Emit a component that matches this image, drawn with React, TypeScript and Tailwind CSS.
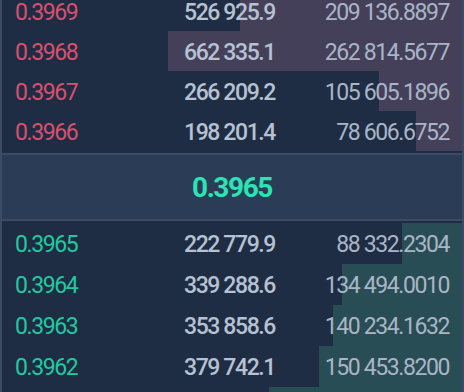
import React from "react";

type Level = { price: string; amount: string; total: string; depth: number };

const ASKS: Level[] = [
  { price: "0.3969", amount: "526 925.9", total: "209 136.8897", depth: 222 },
  { price: "0.3968", amount: "662 335.1", total: "262 814.5677", depth: 294 },
  { price: "0.3967", amount: "266 209.2", total: "105 605.1896", depth: 83 },
  { price: "0.3966", amount: "198 201.4", total: "78 606.6752", depth: 46 },
];

const BIDS: Level[] = [
  { price: "0.3965", amount: "222 779.9", total: "88 332.2304", depth: 60 },
  { price: "0.3964", amount: "339 288.6", total: "134 494.0010", depth: 120 },
  { price: "0.3963", amount: "353 858.6", total: "140 234.1632", depth: 129 },
  { price: "0.3962", amount: "379 742.1", total: "150 453.8200", depth: 143 },
  { price: "0.3961", amount: "402 118.3", total: "159 279.0848", depth: 193 },
];

function Row({ level, side }: { level: Level; side: "ask" | "bid" }) {
  const ask = side === "ask";
  return (
    <div className={`relative flex items-center px-[13px] pt-[2px] ${ask ? "h-10" : "h-[41px]"}`}>
      {/* depth bar */}
      <div
        className={`absolute right-0 top-0 bottom-0 ${ask ? "bg-[#45405a]" : "bg-[#294d54]"}`}
        style={{ width: level.depth }}
      />
      <span
        className={`relative w-[130px] ${ask ? "text-[#d9506e]" : "text-[#22c9a0]"}`}
      >
        {level.price}
      </span>
      <span className="relative w-[130px] text-right font-medium text-[#b6c1d1]">
        {level.amount}
      </span>
      <span className="relative flex-1 text-right text-[#a9b5c6]">{level.total}</span>
    </div>
  );
}

export default function App() {
  return (
    <div
      className="h-[392px] w-[464px] overflow-hidden bg-[#1f2d44] border-x-2 border-[#3b4c64] text-[23px] tracking-[-1.4px] leading-none"
      style={{ fontFamily: "Roboto, 'Liberation Sans', sans-serif" }}
    >
      {/* asks */}
      <div className="-mt-[9px] pb-[2px]">
        {ASKS.map((l) => (
          <Row key={l.price} level={l} side="ask" />
        ))}
      </div>

      {/* last price */}
      <div className="flex h-[68px] items-center justify-center border-y-2 border-[#3b4c64] bg-[#2a3c56] pt-[2px]">
        <span className="text-[28px] font-bold text-[#2be3b3]">0.3965</span>
      </div>

      {/* bids */}
      <div className="pt-[2px]">
        {BIDS.map((l) => (
          <Row key={l.price} level={l} side="bid" />
        ))}
      </div>
    </div>
  );
}
